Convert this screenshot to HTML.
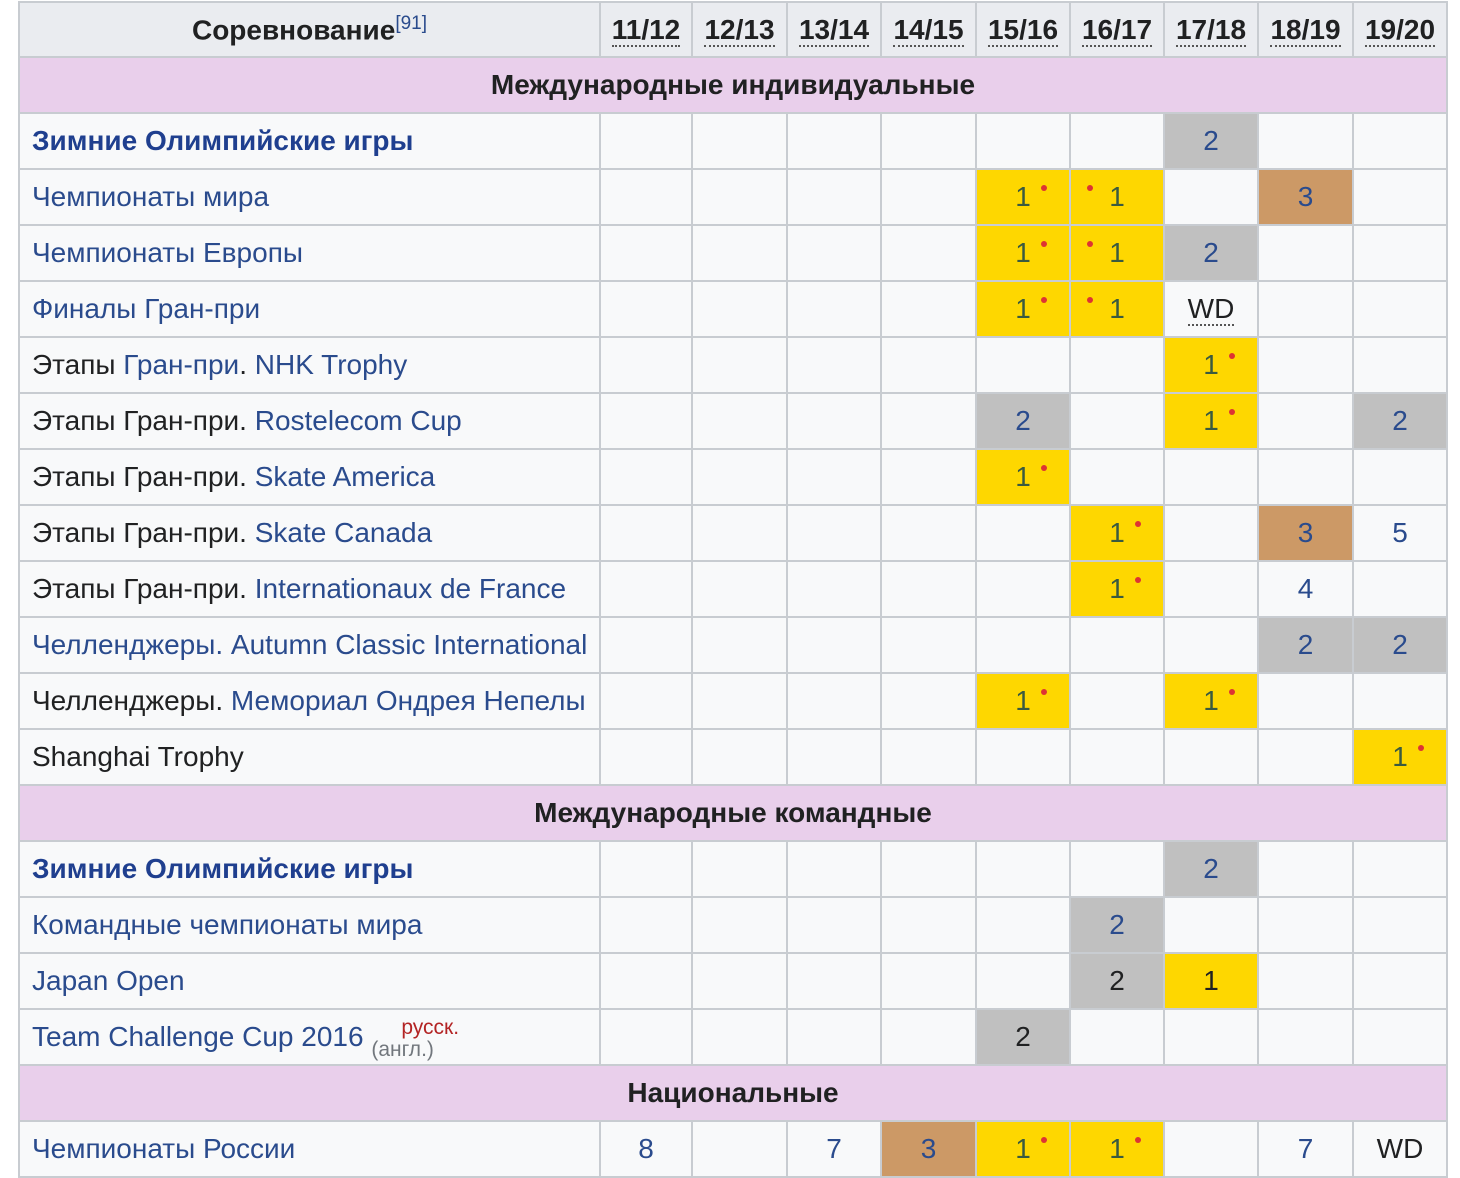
<!DOCTYPE html>
<html><head><meta charset="utf-8"><style>
body{margin:0;background:#fff;width:1460px;height:1162px;overflow:hidden;font-family:"Liberation Sans",Arial,sans-serif;}
table{position:absolute;left:18px;top:1px;border-collapse:collapse;table-layout:fixed;width:1429px;}
td,th{border:2px solid #c8ccd1;height:54px;padding:0;font-size:28px;text-align:center;position:relative;background:#f8f9fa;color:#202122;}
th{background:#eaecf0;font-weight:bold;height:53px;}
th.y span{border-bottom:2px dotted #555;}
td.n{text-align:left;padding-left:12px;white-space:nowrap;}
.sec td{background:#e9cfeb;font-weight:bold;text-align:center;}
a{color:#2a4b8d;text-decoration:none}
b a{color:#1f3f8f}
td.g{background:#fed700;color:#3a5a40}
td.s{background:#c0c0c0}
td.br{background:#cc9966}
td.bl{color:#2a4b8d}
.s.bl,.br.bl{color:#2a4b8d}
.d{position:absolute;width:6px;height:6px;border-radius:50%;background:#d33;top:15px}
.r{left:calc(50% + 18px)}.l{left:calc(50% - 30px)}
.wd{border-bottom:2px dotted #555}
sup{font-size:19px;color:#2a4b8d;font-weight:normal}
</style></head><body>
<table>
<colgroup><col style="width:581px"><col style="width:92px"><col style="width:95px"><col style="width:94px"><col style="width:95px"><col style="width:94px"><col style="width:94px"><col style="width:94px"><col style="width:95px"><col style="width:94px"></colgroup>
<tr><th>Соревнование<sup>[91]</sup></th><th class="y"><span>11/12</span></th><th class="y"><span>12/13</span></th><th class="y"><span>13/14</span></th><th class="y"><span>14/15</span></th><th class="y"><span>15/16</span></th><th class="y"><span>16/17</span></th><th class="y"><span>17/18</span></th><th class="y"><span>18/19</span></th><th class="y"><span>19/20</span></th></tr>
<tr class="sec"><td colspan="10">Международные индивидуальные</td></tr>
<tr><td class="n"><b><a>Зимние Олимпийские игры</a></b></td><td></td><td></td><td></td><td></td><td></td><td></td><td class="s bl">2</td><td></td><td></td></tr>
<tr><td class="n"><a>Чемпионаты мира</a></td><td></td><td></td><td></td><td></td><td class="g">1<i class="d r"></i></td><td class="g"><i class="d l"></i>1</td><td></td><td class="br bl">3</td><td></td></tr>
<tr><td class="n"><a>Чемпионаты Европы</a></td><td></td><td></td><td></td><td></td><td class="g">1<i class="d r"></i></td><td class="g"><i class="d l"></i>1</td><td class="s bl">2</td><td></td><td></td></tr>
<tr><td class="n"><a>Финалы Гран-при</a></td><td></td><td></td><td></td><td></td><td class="g">1<i class="d r"></i></td><td class="g"><i class="d l"></i>1</td><td><span class="wd">WD</span></td><td></td><td></td></tr>
<tr><td class="n">Этапы <a>Гран-при</a>. <a>NHK Trophy</a></td><td></td><td></td><td></td><td></td><td></td><td></td><td class="g">1<i class="d r"></i></td><td></td><td></td></tr>
<tr><td class="n">Этапы Гран-при. <a>Rostelecom Cup</a></td><td></td><td></td><td></td><td></td><td class="s bl">2</td><td></td><td class="g">1<i class="d r"></i></td><td></td><td class="s bl">2</td></tr>
<tr><td class="n">Этапы Гран-при. <a>Skate America</a></td><td></td><td></td><td></td><td></td><td class="g">1<i class="d r"></i></td><td></td><td></td><td></td><td></td></tr>
<tr><td class="n">Этапы Гран-при. <a>Skate Canada</a></td><td></td><td></td><td></td><td></td><td></td><td class="g">1<i class="d r"></i></td><td></td><td class="br bl">3</td><td class="bl">5</td></tr>
<tr><td class="n">Этапы Гран-при. <a>Internationaux de France</a></td><td></td><td></td><td></td><td></td><td></td><td class="g">1<i class="d r"></i></td><td></td><td class="bl">4</td><td></td></tr>
<tr><td class="n"><a>Челленджеры. Autumn Classic International</a></td><td></td><td></td><td></td><td></td><td></td><td></td><td></td><td class="s bl">2</td><td class="s bl">2</td></tr>
<tr><td class="n">Челленджеры. <a>Мемориал Ондрея Непелы</a></td><td></td><td></td><td></td><td></td><td class="g">1<i class="d r"></i></td><td></td><td class="g">1<i class="d r"></i></td><td></td><td></td></tr>
<tr><td class="n">Shanghai Trophy</td><td></td><td></td><td></td><td></td><td></td><td></td><td></td><td></td><td class="g">1<i class="d r"></i></td></tr>
<tr class="sec"><td colspan="10">Международные командные</td></tr>
<tr><td class="n"><b><a>Зимние Олимпийские игры</a></b></td><td></td><td></td><td></td><td></td><td></td><td></td><td class="s bl">2</td><td></td><td></td></tr>
<tr><td class="n"><a>Командные чемпионаты мира</a></td><td></td><td></td><td></td><td></td><td></td><td class="s bl">2</td><td></td><td></td><td></td></tr>
<tr><td class="n"><a>Japan Open</a></td><td></td><td></td><td></td><td></td><td></td><td class="s">2</td><td class="g" style="color:#202122">1</td><td></td><td></td></tr>
<tr><td class="n"><a>Team Challenge Cup 2016</a> <span style="position:relative;font-size:21px;"><span style="position:relative;top:10px;color:#72777d">(англ.)</span><span style="position:absolute;left:30px;top:-12px;color:#b32424">русск.</span></span></td><td></td><td></td><td></td><td></td><td class="s">2</td><td></td><td></td><td></td><td></td></tr>
<tr class="sec"><td colspan="10">Национальные</td></tr>
<tr><td class="n"><a>Чемпионаты России</a></td><td class="bl">8</td><td></td><td class="bl">7</td><td class="br bl">3</td><td class="g">1<i class="d r"></i></td><td class="g">1<i class="d r"></i></td><td></td><td class="bl">7</td><td>WD</td></tr>
</table>
</body></html>
